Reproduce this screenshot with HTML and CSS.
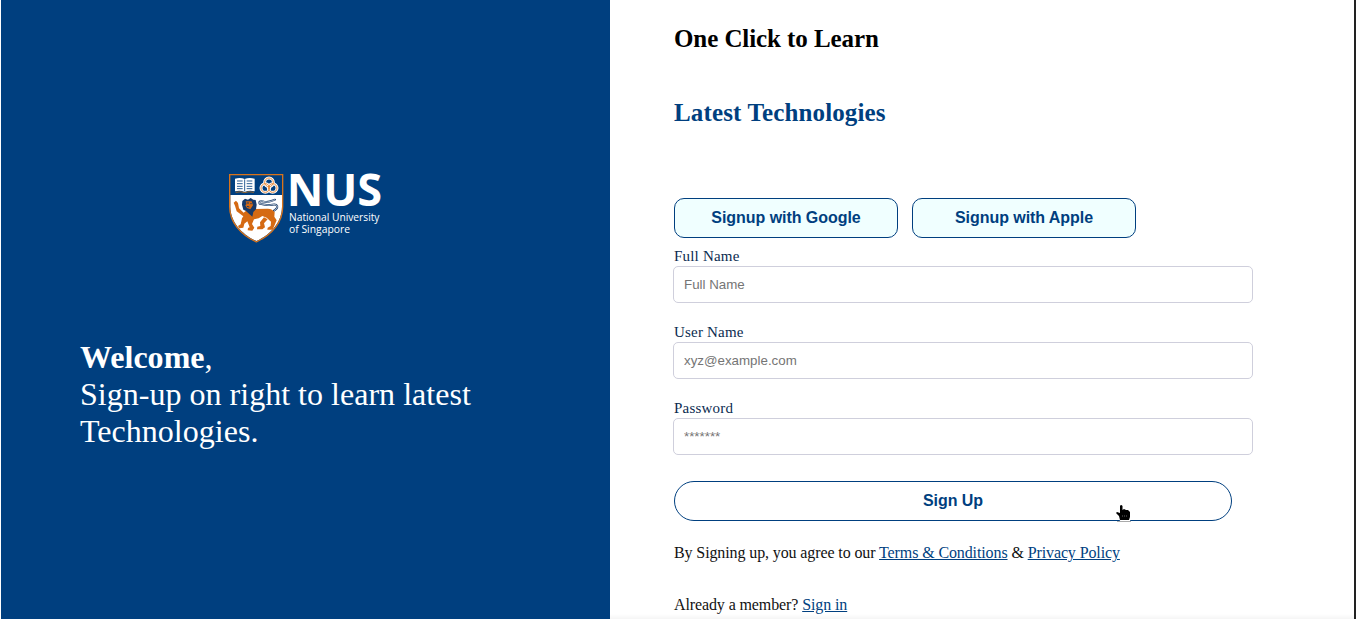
FILE: index.html
```html
<!DOCTYPE html>
<html lang="en">
<head>
<meta charset="utf-8">
<title>Sign Up</title>
<link rel="stylesheet" href="styles.css">
</head>
<body>
<div class="page">
  <section class="intro">
    <svg class="logo" viewBox="228 172 156 74" width="156" height="74">
      <g transform="translate(220 165) scale(.33333)">
        <path d="M29 29H188V125C188 170 158 208 109 231C60 208 29 170 29 125Z" fill="#003f7f"/>
        <path d="M31 90H186V125C186 168 156 206 109 228C62 206 31 168 31 125Z" fill="#fff"/>
        <path d="M29 29H188V125C188 170 158 208 109 231C60 208 29 170 29 125Z" fill="none" stroke="#d9731a" stroke-width="4"/>
        <path d="M45 41Q61 36 74 42Q87 36 104 41V79Q87 75 74 81Q61 75 45 79Z" fill="#fff"/>
        <path d="M47 82Q63 78 74 83Q86 78 102 82" fill="none" stroke="#ef7c00" stroke-width="2"/>
        <path d="M74 43V79M51 48H68M51 56H68M51 64H68M51 71H68M80 48H97M80 56H97M80 64H97M80 71H97" stroke="#003f7f" stroke-width="2.5"/>
        <g fill="none" stroke="#fff" stroke-width="9">
          <circle cx="147" cy="52" r="13"/><circle cx="136" cy="69" r="13"/><circle cx="158" cy="69" r="13"/>
        </g>
        <g fill="none" stroke="#e58a3c" stroke-width="3">
          <circle cx="147" cy="52" r="13"/><circle cx="136" cy="69" r="13"/><circle cx="158" cy="69" r="13"/>
        </g>
        <path d="M162 137C178 127 173 116 157 119C143 123 134 118 119 116C115 109 123 107 132 110C145 114 156 107 165 104" fill="none" stroke="#173a69" stroke-width="6" stroke-linecap="round"/>
        <path d="M162 137C178 127 173 116 157 119C143 123 134 118 119 116C115 109 123 107 132 110C145 114 156 107 165 104" fill="none" stroke="#fff" stroke-width="2"/>
        <path d="M41 113L48 107L54 114L57 130L71 143L82 134L105 132L143 131Q158 132 164 142L163 155L170 166L158 194L142 194L143 188L152 183L153 170L140 158L127 153L116 160L102 163L96 177L103 188L97 197L83 196L84 189L89 187L82 169L73 176L70 188L58 190L54 183L62 178L66 160L70 154L50 139L45 122ZM132 157L143 163L132 175L135 187L127 193L111 193L112 185L121 183L120 172Z" fill="#d56a13"/>
        <path d="M67 108L75 101L84 104L92 99L100 104L107 105L110 119L108 133L100 141L97 155L87 146L78 138L70 134L66 119Z" fill="#173a69"/>
        <path d="M77 109L95 109L99 121L91 133L81 129L76 121L79 118Z" fill="#d56a13"/>
        <path d="M80 114H87M91 116H95M81 124L88 126" stroke="#173a69" stroke-width="3"/>
      </g>
      <text class="logo-name" x="286.700" y="206" textLength="95.500" lengthAdjust="spacingAndGlyphs">NUS</text>
      <text class="logo-caption" x="289" y="221" textLength="90.5" lengthAdjust="spacingAndGlyphs">National University</text>
      <text class="logo-caption" x="289" y="233.3" textLength="61" lengthAdjust="spacingAndGlyphs">of Singapore</text>
    </svg>
    <p class="welcome"><b>Welcome</b>,<br>Sign-up on right to learn latest Technologies.</p>
  </section>
  <main class="signup">
    <h2 class="title">One Click to Learn</h2>
    <h2 class="title subtitle">Latest Technologies</h2>
    <div class="social">
      <button class="social-button">Signup with Google</button>
      <button class="social-button">Signup with Apple</button>
    </div>
    <form class="form">
      <label class="label" for="name">Full Name</label>
      <input class="input" id="name" placeholder="Full Name">
      <label class="label" for="user">User Name</label>
      <input class="input" id="user" placeholder="xyz@example.com">
      <label class="label" for="password">Password</label>
      <input class="input" id="password" type="password" placeholder="*******">
      <button class="submit" type="button">Sign Up</button>
    </form>
    <p class="note">By Signing up, you agree to our <a class="link" href="#">Terms &amp; Conditions</a> &amp; <a class="link" href="#">Privacy Policy</a></p>
    <p class="note member">Already a member? <a class="link" href="#">Sign in</a></p>
  </main>
  <div class="bottom-shade"></div>
  <svg class="pointer" viewBox="0 0 17 18" width="17" height="18">
    <path d="M4 2Q5 0 6.500 2V6L8 5L10 6L12 6L14 8V13L13 16H5L3 12L0 9L1 8L4 9Z" fill="#000" stroke="#fff" stroke-width="2.600" stroke-linejoin="round"/>
    <path d="M1 17.500H15" stroke="#aaa"/>
    <path d="M4 2Q5 0 6.500 2V6L8 5L10 6L12 6L14 8V13L13 16H4L3 12L0 9L1 8L4 9Z" fill="#000"/>
    <path d="M6.500 11V13M8.500 11V13M10.500 11V13" stroke="#555" stroke-width=".6"/>
  </svg>
</div>
</body>
</html>
```
FILE: styles.css
```css
* { box-sizing: border-box; }
body { margin: 0; font-family: "Liberation Serif", serif; font-size: 16px; background: #fff; overflow: hidden; }
.page { position: relative; display: flex; height: 619px; overflow: hidden; border-left: 1px solid #fff; border-right: 2px solid #222; }
.intro { flex: 0 0 609px; display: flex; flex-direction: column; padding: 172px 79px 0; background: #003f7f; color: #fff; }
.logo { display: block; margin-left: 148px; overflow: visible; }
.logo-name { font-family: "Open Sans", sans-serif; font-weight: 700; font-size: 44px; fill: #fff; }
.logo-caption { font-family: "Open Sans", sans-serif; font-weight: 500; font-size: 11px; fill: #fff; }
.welcome { margin: 93px 0 0; font-size: 32px; line-height: 37px; letter-spacing: .02px; }
.signup { flex: 1; padding: 25px 0 0 64px; }
.title { margin: 0; font-size: 25px; line-height: 28px; letter-spacing: -.08px; color: #000; }
.subtitle { margin-top: 46px; letter-spacing: .14px; color: #003f7f; }
.social { display: flex; gap: 14px; margin-top: 71px; }
.social-button, .submit { height: 40px; border: 1px solid #003f7f; color: #003f7f; font: bold 16px "Liberation Sans", sans-serif; letter-spacing: -.05px; padding: 0; }
.social-button { width: 224px; border-radius: 10px; background: #f0ffff; }
.form { display: flex; flex-direction: column; align-items: flex-start; margin-top: 10px; }
.label { height: 18px; font-size: 15px; line-height: 17px; letter-spacing: .2px; color: #0b2b50; }
.input { width: 580px; height: 37px; margin: 0 0 21px -1px; padding: 0 10px; border: 1px solid #cfcfdc; border-radius: 5px; background: #fff; font: 13.333px "Liberation Sans", sans-serif; }
.submit { width: 558px; margin-top: 5px; border-radius: 20px; background: #fff; }
.note { margin: 23px 0 0; line-height: 18px; letter-spacing: -.11px; color: #111; }
.member { margin-top: 34px; }
.link { color: #003f7f; text-decoration: underline; }
.bottom-shade { position: absolute; left: 609px; right: 0; bottom: 0; height: 5px; background: linear-gradient(rgba(0, 0, 0, 0), rgba(0, 0, 0, .04)); }
.pointer { position: absolute; left: 1115px; top: 504px; }
```
